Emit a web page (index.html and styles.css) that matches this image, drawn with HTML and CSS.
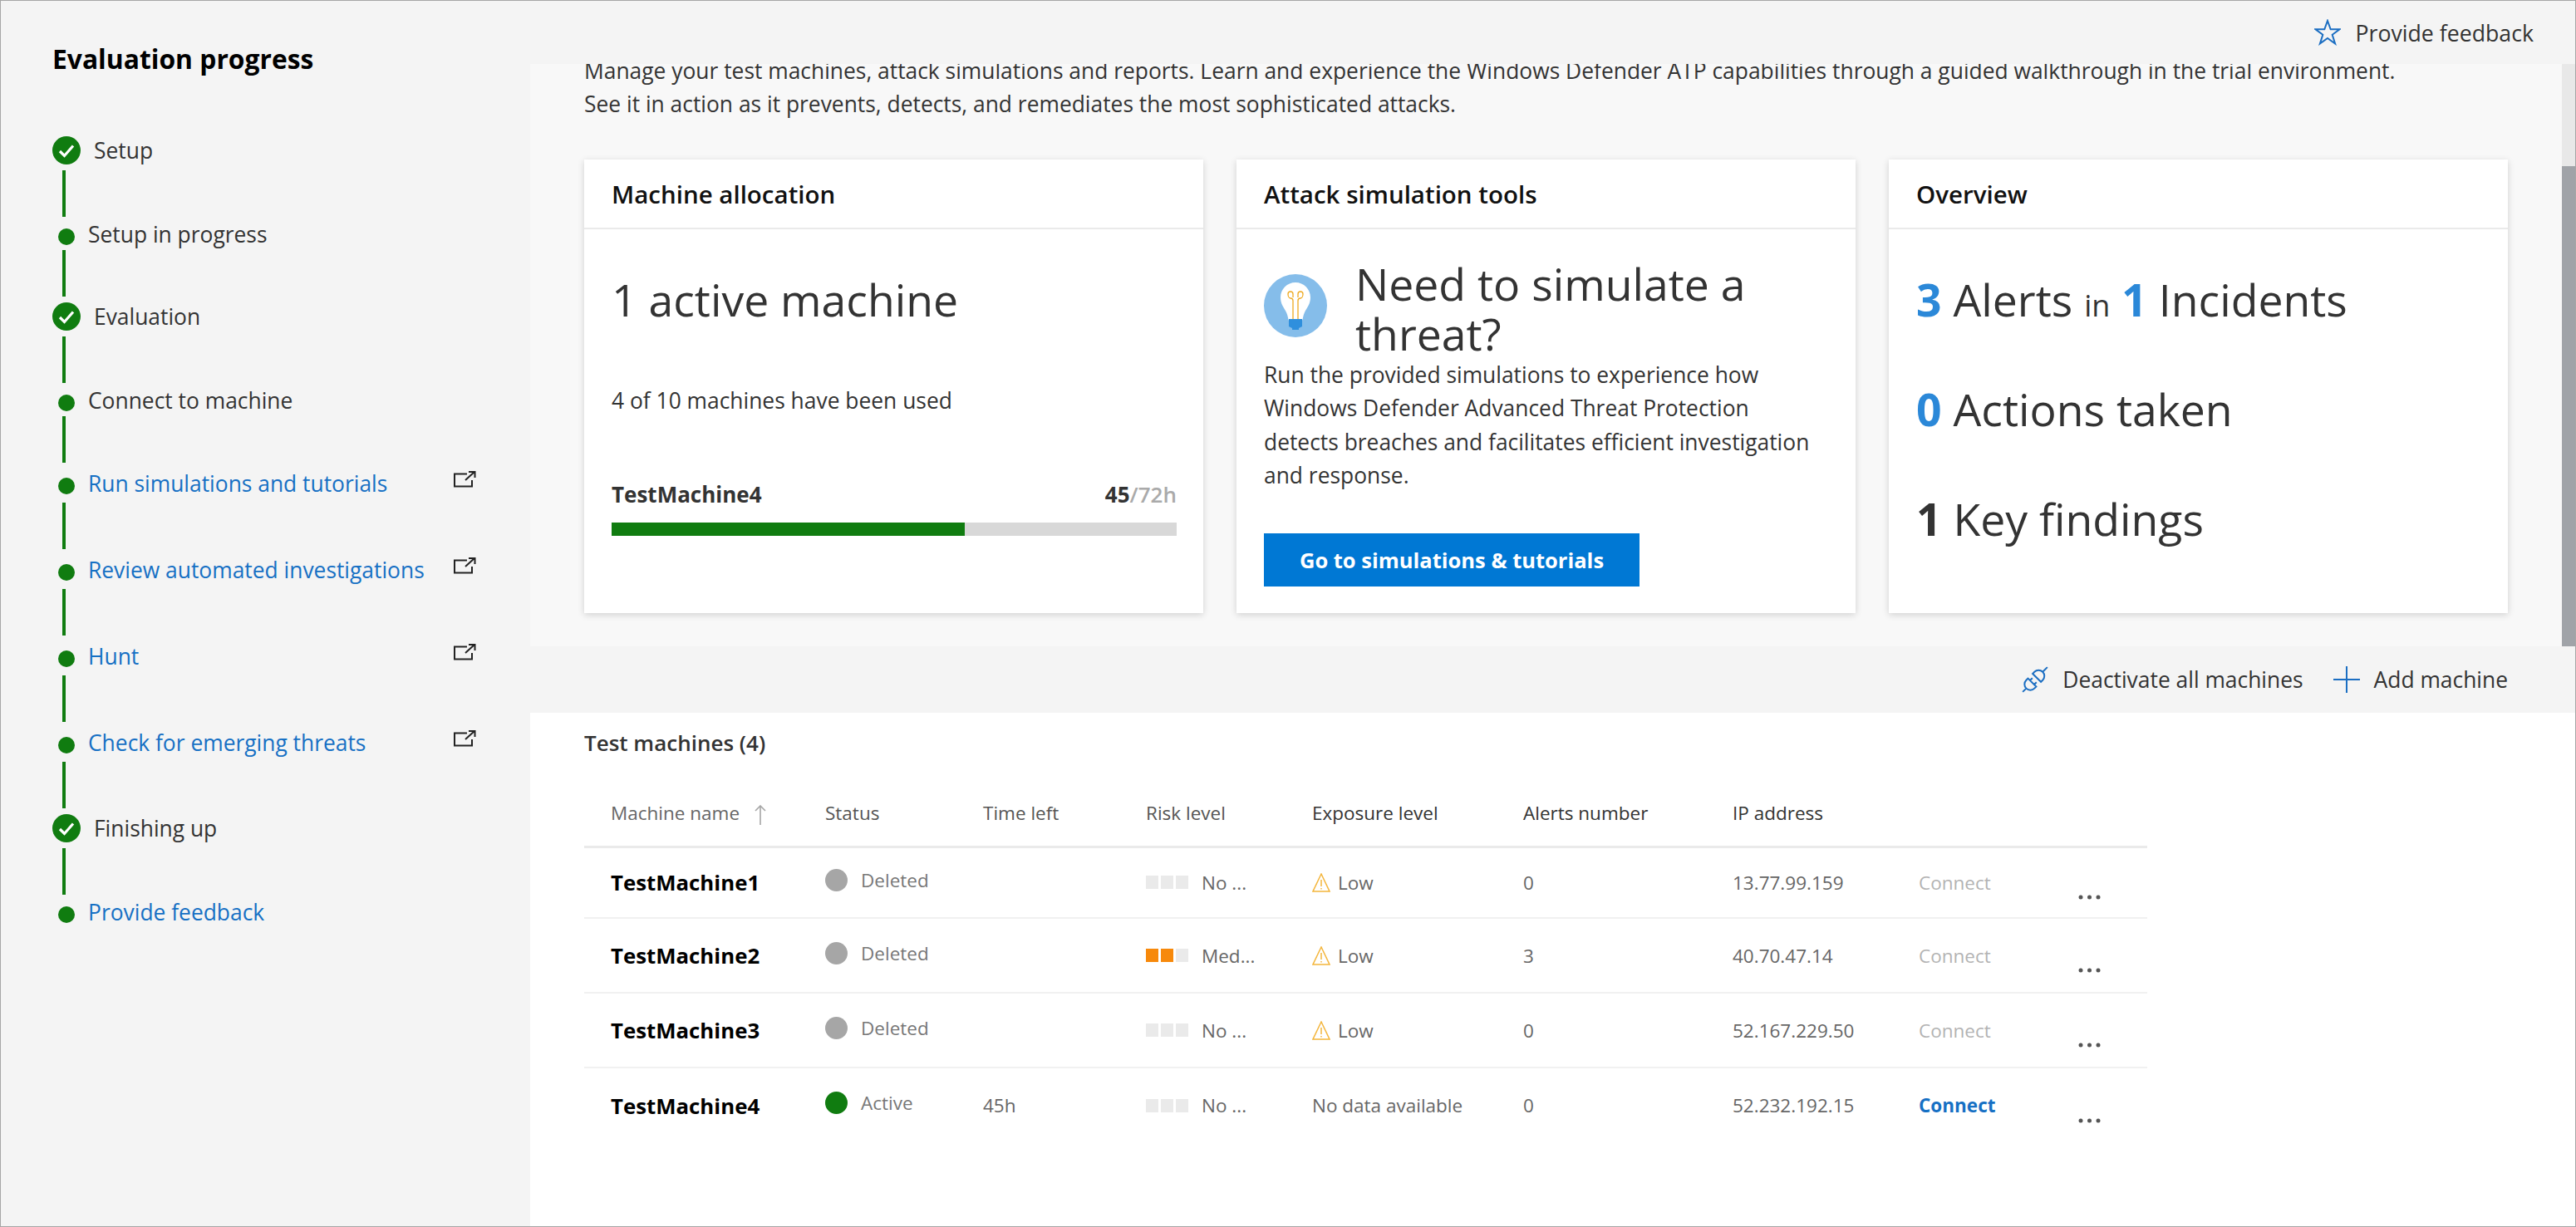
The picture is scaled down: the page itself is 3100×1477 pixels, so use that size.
FILE: index.html
```html
<!DOCTYPE html>
<html lang="en">
<head>
    <meta charset="UTF-8">
    <meta name="viewport" content="width=device-width, initial-scale=1.0">
    <title>Evaluation lab</title>
    <link rel="stylesheet" href="styles.css">
</head>
<body>
    <div class="frame">
        <aside class="sidebar">
            <h1>Evaluation progress</h1>
            <div class="steps">
                <div class="step">
                    <svg class="check" viewBox="0 0 34 34"><circle cx="17" cy="17" r="17" fill="#107c10"/><path d="M9 18l5.5 5.5L25 11.5" fill="none" stroke="#fff" stroke-width="3.2"/></svg>
                    <span>Setup</span>
                </div>
                <div class="line"></div>
                <div class="step step-dot"><i class="dot"></i><span>Setup in progress</span></div>
                <div class="line"></div>
                <div class="step">
                    <svg class="check" viewBox="0 0 34 34"><circle cx="17" cy="17" r="17" fill="#107c10"/><path d="M9 18l5.5 5.5L25 11.5" fill="none" stroke="#fff" stroke-width="3.2"/></svg>
                    <span>Evaluation</span>
                </div>
                <div class="line"></div>
                <div class="step step-dot"><i class="dot"></i><span>Connect to machine</span></div>
                <div class="line"></div>
                <div class="step step-link">
                    <i class="dot"></i><a href="#">Run simulations and tutorials</a>
                    <svg class="ext" viewBox="0 0 27 21"><path d="M16 4.500H1V19.500H22V12M14 12L25 2M18 2H25.500V9" fill="none" stroke="#222" stroke-width="2"/></svg>
                </div>
                <div class="line"></div>
                <div class="step step-link">
                    <i class="dot"></i><a href="#">Review automated investigations</a>
                    <svg class="ext" viewBox="0 0 27 21"><path d="M16 4.500H1V19.500H22V12M14 12L25 2M18 2H25.500V9" fill="none" stroke="#222" stroke-width="2"/></svg>
                </div>
                <div class="line"></div>
                <div class="step step-link">
                    <i class="dot"></i><a href="#">Hunt</a>
                    <svg class="ext" viewBox="0 0 27 21"><path d="M16 4.500H1V19.500H22V12M14 12L25 2M18 2H25.500V9" fill="none" stroke="#222" stroke-width="2"/></svg>
                </div>
                <div class="line"></div>
                <div class="step step-link">
                    <i class="dot"></i><a href="#">Check for emerging threats</a>
                    <svg class="ext" viewBox="0 0 27 21"><path d="M16 4.500H1V19.500H22V12M14 12L25 2M18 2H25.500V9" fill="none" stroke="#222" stroke-width="2"/></svg>
                </div>
                <div class="line"></div>
                <div class="step">
                    <svg class="check" viewBox="0 0 34 34"><circle cx="17" cy="17" r="17" fill="#107c10"/><path d="M9 18l5.5 5.5L25 11.5" fill="none" stroke="#fff" stroke-width="3.2"/></svg>
                    <span>Finishing up</span>
                </div>
                <div class="line"></div>
                <div class="step step-dot"><i class="dot"></i><a href="#">Provide feedback</a></div>
            </div>
        </aside>

        <main class="main">
            <div class="topbar">
                <svg class="star" viewBox="0 0 32 32"><path d="M16 2l3.700 10.300H30.500l-8.800 6.500 3.400 10.700L16 23l-9.100 6.500 3.400-10.700-8.800-6.500h10.800z" fill="none" stroke="#1b6ec2" stroke-width="2"/></svg>
                <span>Provide feedback</span>
            </div>

            <div class="pane">
                <div class="pane-content">
                    <p class="intro">Manage your test machines, attack simulations and reports. Learn and experience the Windows Defender ATP capabilities through a guided walkthrough in the trial environment.<br>See it in action as it prevents, detects, and remediates the most sophisticated attacks.</p>
                    <div class="cards">
                        <section class="card">
                            <h2>Machine allocation</h2>
                            <div class="card-body">
                                <div class="big">1 active machine</div>
                                <p class="used">4 of 10 machines have been used</p>
                                <div class="usage">
                                    <strong>TestMachine4</strong>
                                    <span><b>45</b>/72h</span>
                                </div>
                                <div class="bar"><div class="bar-fill" style="width: 62.5%"></div></div>
                            </div>
                        </section>
                        <section class="card">
                            <h2>Attack simulation tools</h2>
                            <div class="card-body">
                                <div class="threat">
                                    <svg class="bulb" viewBox="0 0 76 76">
                                        <circle cx="38" cy="38" r="38" fill="#85bdea"/>
                                        <path d="M38 10c-10 0-18 8-18 18 0 8 4 12 7 18 2 4 2 8 3 10h16c1-2 1-6 3-10 3-6 7-10 7-18 0-10-8-18-18-18z" fill="#fff"/>
                                        <path d="M35 57V32c0-2-1-3-3-3-2 0-3-3-3-5s1-3 3-3 3 1 3 3v4M41 57V32c0-2 1-3 3-3 2 0 3-3 3-5s-1-3-3-3-3 1-3 3v4" fill="none" stroke="#eeaa22" stroke-width="1.300"/>
                                        <path d="M30 54h16v9l-4 2v2h-8v-2l-4-2z" fill="#2f8fdd"/>
                                    </svg>
                                    <div class="threat-title">Need to simulate a threat?</div>
                                </div>
                                <p class="threat-text">Run the provided simulations to experience how Windows Defender Advanced Threat Protection detects breaches and facilitates efficient investigation and response.</p>
                                <button class="primary">Go to simulations &amp; tutorials</button>
                            </div>
                        </section>
                        <section class="card">
                            <h2>Overview</h2>
                            <div class="card-body">
                                <div class="big"><b class="num">3</b> Alerts <small>in</small> <b class="num">1</b> Incidents</div>
                                <div class="big stat"><b class="num">0</b> Actions taken</div>
                                <div class="big stat"><b>1</b> Key findings</div>
                            </div>
                        </section>
                    </div>
                </div>
                <div class="scrollbar"><div class="thumb"></div></div>
            </div>

            <div class="toolbar">
                <div class="tool">
                    <svg class="plug" viewBox="0 0 32 32"><g transform="rotate(-45 16 16)" fill="none" stroke="#1b6ec2" stroke-width="2"><path d="M11 9v14H8a7 7 0 0 1 0-14zM1 16H-5M11 12.500h4M11 19.500h4"/><path d="M19 9v14h3a7 7 0 0 0 0-14zM29 16h8"/></g></svg>
                    <span>Deactivate all machines</span>
                </div>
                <div class="tool">
                    <svg class="plus" viewBox="0 0 32 32"><path d="M16 0v32M0 16h32" fill="none" stroke="#1b6ec2" stroke-width="2"/></svg>
                    <span>Add machine</span>
                </div>
            </div>

            <div class="machines">
                <h3>Test machines (4)</h3>
                <table>
                    <thead>
                        <tr>
                            <th class="c-name">Machine name <svg class="sort" viewBox="0 0 14 24"><path d="M7 24V1M1 7l6-6 6 6" fill="none" stroke="#a6a6a6" stroke-width="1.600"/></svg></th>
                            <th class="c-status">Status</th>
                            <th class="c-time">Time left</th>
                            <th class="c-risk">Risk level</th>
                            <th class="c-exp">Exposure level</th>
                            <th class="c-alerts">Alerts number</th>
                            <th class="c-ip">IP address</th>
                            <th class="c-conn"></th>
                            <th class="c-more"></th>
                        </tr>
                    </thead>
                    <tbody>
                        <tr>
                            <td class="name">TestMachine1</td>
                            <td><div class="status"><i class="status-dot"></i>Deleted</div></td>
                            <td></td>
                            <td><div class="risk"><span class="squares"><i></i><i></i><i></i></span>No ...</div></td>
                            <td><div class="exposure"><svg class="warn" viewBox="0 0 22 23"><path d="M11 1L1 22h20zM11 8v8M11 18v1.500" fill="none" stroke="#f4b63d" stroke-width="1.500"/></svg>Low</div></td>
                            <td>0</td>
                            <td>13.77.99.159</td>
                            <td class="connect">Connect</td>
                            <td><svg class="more" viewBox="0 0 27 6"><circle cx="3" cy="3" r="2.500"/><circle cx="13.500" cy="3" r="2.500"/><circle cx="24" cy="3" r="2.500"/></svg></td>
                        </tr>
                        <tr>
                            <td class="name">TestMachine2</td>
                            <td><div class="status"><i class="status-dot"></i>Deleted</div></td>
                            <td></td>
                            <td><div class="risk"><span class="squares medium"><i></i><i></i><i></i></span>Med...</div></td>
                            <td><div class="exposure"><svg class="warn" viewBox="0 0 22 23"><path d="M11 1L1 22h20zM11 8v8M11 18v1.500" fill="none" stroke="#f4b63d" stroke-width="1.500"/></svg>Low</div></td>
                            <td>3</td>
                            <td>40.70.47.14</td>
                            <td class="connect">Connect</td>
                            <td><svg class="more" viewBox="0 0 27 6"><circle cx="3" cy="3" r="2.500"/><circle cx="13.500" cy="3" r="2.500"/><circle cx="24" cy="3" r="2.500"/></svg></td>
                        </tr>
                        <tr>
                            <td class="name">TestMachine3</td>
                            <td><div class="status"><i class="status-dot"></i>Deleted</div></td>
                            <td></td>
                            <td><div class="risk"><span class="squares"><i></i><i></i><i></i></span>No ...</div></td>
                            <td><div class="exposure"><svg class="warn" viewBox="0 0 22 23"><path d="M11 1L1 22h20zM11 8v8M11 18v1.500" fill="none" stroke="#f4b63d" stroke-width="1.500"/></svg>Low</div></td>
                            <td>0</td>
                            <td>52.167.229.50</td>
                            <td class="connect">Connect</td>
                            <td><svg class="more" viewBox="0 0 27 6"><circle cx="3" cy="3" r="2.500"/><circle cx="13.500" cy="3" r="2.500"/><circle cx="24" cy="3" r="2.500"/></svg></td>
                        </tr>
                        <tr>
                            <td class="name">TestMachine4</td>
                            <td><div class="status"><i class="status-dot active"></i>Active</div></td>
                            <td>45h</td>
                            <td><div class="risk"><span class="squares"><i></i><i></i><i></i></span>No ...</div></td>
                            <td>No data available</td>
                            <td>0</td>
                            <td>52.232.192.15</td>
                            <td class="connect live">Connect</td>
                            <td><svg class="more" viewBox="0 0 27 6"><circle cx="3" cy="3" r="2.500"/><circle cx="13.500" cy="3" r="2.500"/><circle cx="24" cy="3" r="2.500"/></svg></td>
                        </tr>
                    </tbody>
                </table>
            </div>
        </main>
    </div>
</body>
</html>
```

FILE: styles.css
```css
* {
    box-sizing: border-box;
}
html, body {
    margin: 0;
    padding: 0;
    height: 100%;
    overflow: hidden;
}
body {
    font-family: 'Open Sans', 'Noto Sans', sans-serif;
    color: #333;
    background-color: #fff;
}
h1, h2, h3, p {
    margin: 0;
}
a {
    color: #1670c4;
    text-decoration: none;
}
.frame {
    display: flex;
    height: 1477px;
    border: 1px solid #a6a6a6;
}

/* left column */
.sidebar {
    flex: 0 0 637px;
    padding: 48px 65px 0 62px;
    background-color: #f4f4f4;
}
.sidebar h1 {
    font-size: 31.800px;
    line-height: 44px;
    font-weight: 700;
    color: #000;
}
.steps {
    margin-top: 71px;
    font-size: 26.400px;
}
.step {
    display: flex;
    align-items: center;
    gap: 16px;
    height: 34px;
    margin: 7px 0;
    white-space: nowrap;
}
.steps .step:first-child {
    margin-top: 0;
}
.step-dot {
    height: 20px;
    margin: 14px 0 6px;
}
.step-link {
    height: 20px;
    margin: 18px 0 10px;
}
.step-dot span, .step-dot a, .step-link a {
    margin-bottom: 6px;
}
.check {
    width: 34px;
    height: 34px;
    flex: none;
}
.dot {
    flex: none;
    width: 20px;
    height: 20px;
    margin-left: 7px;
    border-radius: 50%;
    background-color: #107c10;
}
.line {
    width: 4px;
    height: 56px;
    margin-left: 12px;
    background-color: #107c10;
}
.ext {
    flex: none;
    width: 27px;
    height: 21px;
    margin-left: auto;
    margin-bottom: 18px;
}

/* right column */
.main {
    flex: 1;
    min-width: 0;
    display: flex;
    flex-direction: column;
}
.topbar {
    flex: none;
    height: 76px;
    display: flex;
    align-items: center;
    justify-content: flex-end;
    gap: 17px;
    padding-right: 50px;
    font-size: 26.700px;
    background-color: #f4f4f4;
}
.star {
    width: 32px;
    height: 32px;
}
.pane {
    flex: none;
    height: 701px;
    display: flex;
    overflow: hidden;
    background-color: #f8f8f8;
}
.pane-content {
    flex: 1;
    min-width: 0;
    padding-left: 65px;
}
.intro {
    margin-top: -12px;
    font-size: 26.400px;
    line-height: 40px;
    white-space: nowrap;
}
.cards {
    display: flex;
    gap: 40px;
    margin-top: 47px;
}
.card {
    flex: 0 0 745px;
    height: 546px;
    background: #fff;
    box-shadow: 0 2px 8px rgba(0,0,0,0.16);
}
.card h2 {
    height: 84px;
    padding-left: 33px;
    border-bottom: 2px solid #eaeaea;
    font-size: 29.500px;
    line-height: 84px;
    font-weight: 600;
    color: #111;
}
.card-body {
    padding: 50px 32px 0 33px;
}
.big {
    font-size: 53.500px;
    line-height: 70px;
    color: #333;
    white-space: nowrap;
}
.big small {
    font-size: 36px;
    line-height: 1;
}
.num {
    color: #2b88d8;
}
.stat {
    margin-top: 62px;
}
.used {
    margin-top: 66px;
    font-size: 26.400px;
    line-height: 40px;
}
.usage {
    display: flex;
    justify-content: space-between;
    margin-top: 73px;
    font-size: 26px;
    line-height: 40px;
    font-weight: 600;
    color: #aaa;
}
.usage strong, .usage b {
    color: #333;
    font-weight: 700;
}
.bar {
    height: 16px;
    margin-top: 14px;
    background-color: #d8d8d8;
}
.bar-fill {
    height: 100%;
    background-color: #107c10;
}
.threat {
    display: flex;
    align-items: center;
    gap: 34px;
    margin-top: -14px;
}
.bulb {
    flex: none;
    width: 76px;
    height: 76px;
    margin-bottom: 8px;
}
.threat-title {
    font-size: 53.500px;
    line-height: 60px;
}
.threat-text {
    max-width: 670px;
    margin-top: -1px;
    font-size: 26.400px;
    line-height: 40.300px;
}
.primary {
    display: block;
    width: 452px;
    height: 64px;
    margin-top: 50px;
    border: none;
    background-color: #0078d4;
    color: #fff;
    font-family: inherit;
    font-size: 25.500px;
    font-weight: 700;
    cursor: pointer;
}
.scrollbar {
    flex: none;
    width: 16px;
    padding-top: 123px;
    background-color: #e8e8e8;
}
.thumb {
    height: 100%;
    background-color: #a0a3a8;
}
.toolbar {
    flex: none;
    height: 80px;
    display: flex;
    align-items: center;
    justify-content: flex-end;
    gap: 36px;
    padding-right: 81px;
    font-size: 26.400px;
    background-color: #f4f4f4;
}
.tool {
    display: flex;
    align-items: center;
    gap: 17px;
}
.plug, .plus {
    width: 32px;
    height: 32px;
}

/* machines table */
.machines {
    flex: 1;
    padding: 16px 0 0 65px;
    background-color: #fff;
}
.machines h3 {
    font-size: 26px;
    line-height: 40px;
    font-weight: 600;
}
table {
    width: 1881px;
    margin-top: 26px;
    border-collapse: collapse;
    table-layout: fixed;
    font-size: 22.500px;
    color: #666;
}
th {
    height: 79px;
    padding: 0 16px;
    border-bottom: 3px solid #eaeaea;
    text-align: left;
    font-weight: 400;
    white-space: nowrap;
}
td {
    height: 90px;
    padding: 0 16px;
    border-bottom: 2px solid #f1f1f1;
    white-space: nowrap;
}
tbody tr:first-child td {
    height: 86px;
}
tbody tr:last-child td {
    border-bottom: none;
}
.c-name { width: 274px; padding-left: 32px; color: #666; }
.c-status { width: 190px; color: #555; }
.c-time { width: 196px; color: #555; }
.c-risk { width: 200px; color: #555; }
.c-exp { width: 254px; color: #333; }
.c-alerts { width: 252px; color: #333; }
.c-ip { width: 224px; color: #333; }
.c-conn { width: 187px; }
.c-more { width: 104px; }
.sort {
    width: 14px;
    height: 24px;
    margin-left: 12px;
    vertical-align: middle;
}
.name {
    padding-left: 32px;
    font-size: 25.800px;
    font-weight: 700;
    color: #000;
}
.status, .risk, .exposure {
    display: flex;
    align-items: center;
}
.status {
    gap: 16px;
    margin-top: -6px;
    color: #777;
}
.status-dot {
    flex: none;
    width: 27px;
    height: 27px;
    border-radius: 50%;
    background-color: #a6a6a6;
}
.status-dot.active {
    background-color: #107c10;
}
.risk {
    gap: 16px;
}
.squares {
    display: flex;
    gap: 3px;
}
.squares i {
    width: 15px;
    height: 16px;
    background-color: #eaeaea;
}
.squares.medium i:nth-child(-n+2) {
    background-color: #f7890b;
}
.exposure {
    gap: 9px;
}
.warn {
    flex: none;
    width: 22px;
    height: 23px;
}
.connect {
    color: #b3b3b3;
}
.connect.live {
    color: #1670c4;
    font-weight: 700;
}
.more {
    display: block;
    width: 27px;
    height: 6px;
    margin: 36px 0 0 5px;
    fill: #555;
}
```
